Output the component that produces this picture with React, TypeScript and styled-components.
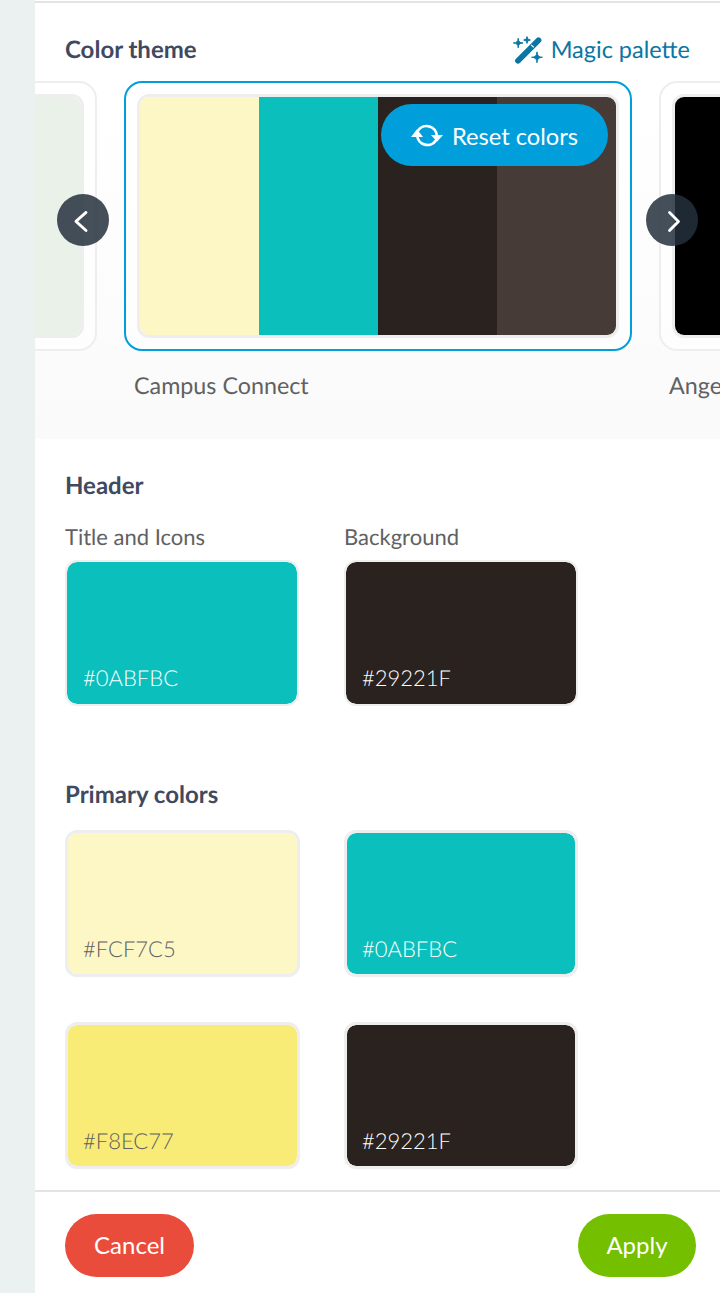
import React from 'react';
import styled, { createGlobalStyle } from 'styled-components';

const GlobalStyle = createGlobalStyle`
  html, body {
    margin: 0;
    padding: 0;
    background: #fff;
    font-family: Lato, "Open Sans", sans-serif;
    text-rendering: geometricPrecision;
  }
  * {
    box-sizing: border-box;
  }
`;

const themes = [
  { name: '', colors: ['#e9f1e9'] },
  { name: 'Campus Connect', colors: ['#fcf7c5', '#0abfbc', '#29221f', '#463b37'], selected: true },
  { name: 'Angel', colors: ['#000000'] },
];

const App = () => (
  <Page>
    <GlobalStyle />
    <Rail />
    <Panel>
      <Scroll>
        <ThemeSection>
          <TitleRow>
            <Heading>Color theme</Heading>
            <MagicLink>
              <WandIcon />
              Magic palette
            </MagicLink>
          </TitleRow>
          <Carousel>
            <Track>
              {themes.map((theme, i) => (
                <ThemeItem key={i}>
                  <ThemeCard selected={!!theme.selected}>
                    <Preview>
                      {theme.colors.map(c => (
                        <Stripe key={c} color={c} />
                      ))}
                    </Preview>
                    {theme.selected && (
                      <ResetButton>
                        <SyncIcon />
                        Reset colors
                      </ResetButton>
                    )}
                  </ThemeCard>
                  <ThemeName>{theme.name}</ThemeName>
                </ThemeItem>
              ))}
            </Track>
            <ArrowLeft>
              <Chevron viewBox="0 0 24 24">
                <path d="M14.8 5 5.5 13.3l9.3 8.4" />
              </Chevron>
            </ArrowLeft>
            <ArrowRight>
              <Chevron viewBox="0 0 24 24">
                <path d="M9.7 5 18 13.3l-8.3 8.4" />
              </Chevron>
            </ArrowRight>
          </Carousel>
        </ThemeSection>

        <HeaderSection>
          <Heading>Header</Heading>
          <SwatchGrid>
            <SwatchField>
              <FieldLabel>Title and Icons</FieldLabel>
              <Swatch color="#0abfbc" light>#0ABFBC</Swatch>
            </SwatchField>
            <SwatchField>
              <FieldLabel>Background</FieldLabel>
              <Swatch color="#29221f" light>#29221F</Swatch>
            </SwatchField>
          </SwatchGrid>
        </HeaderSection>

        <PrimarySection>
          <Heading>Primary colors</Heading>
          <PrimaryGrid>
            <Swatch color="#fcf7c5" tall>#FCF7C5</Swatch>
            <Swatch color="#0abfbc" light tall>#0ABFBC</Swatch>
            <Swatch color="#f8ec77" tall>#F8EC77</Swatch>
            <Swatch color="#29221f" light tall>#29221F</Swatch>
          </PrimaryGrid>
        </PrimarySection>
      </Scroll>
      <Footer>
        <PillButton color="#ea4c3c">Cancel</PillButton>
        <PillButton color="#74bf00" narrow>Apply</PillButton>
      </Footer>
    </Panel>
  </Page>
);

export default App;

const sparkle = (x: number, y: number, r: number) =>
  `M${x} ${y - r}Q${x} ${y} ${x + r} ${y}Q${x} ${y} ${x} ${y + r}Q${x} ${y} ${x - r} ${y}Q${x} ${y} ${x} ${y - r}Z`;

const WandIcon = () => (
  <svg width="30" height="30" viewBox="0 0 30 30">
    <path d="M5 25.7 25.5 5.3" stroke="#0b76a4" strokeWidth="5.8" strokeLinecap="round" />
    <path d="M18.2 9.8 20.8 12.4" stroke="#fff" strokeWidth="1.2" />
    <path
      d={sparkle(5.2, 8, 4.8) + sparkle(14, 5, 3.4) + sparkle(24, 22.3, 5.4)}
      fill="#0b76a4"
      stroke="#0b76a4"
      strokeWidth="1"
      strokeLinejoin="round"
    />
  </svg>
);

const SyncIcon = () => (
  <svg width="32" height="25" viewBox="0 0 32 25" fill="none">
    <path d="M7 7.8A10.2 10.2 0 0 1 25.8 12.5" stroke="#fff" strokeWidth="2.7" />
    <path d="M25 17.2A10.2 10.2 0 0 1 6.2 12.5" stroke="#fff" strokeWidth="2.7" />
    <path d="M20 12h12l-6 6.8z" fill="#fff" />
    <path d="M0 14h12L6 6.2z" fill="#fff" />
  </svg>
);

const Page = styled.div`
  display: flex;
  width: 720px;
  height: 1293px;
  overflow: hidden;
`;

const Rail = styled.div`
  flex: 0 0 35px;
  background: #eaf1f0;
`;

const Panel = styled.div`
  flex: 1;
  min-width: 0;
  display: flex;
  flex-direction: column;
  border-top: 2px solid #e3e3e3;
  margin-top: 1px;
`;

const Scroll = styled.div`
  flex: 1;
  min-height: 0;
  overflow: hidden;
`;

const ThemeSection = styled.section`
  height: 436px;
  padding-top: 31px;
  background: linear-gradient(#ffffff 20%, #fafafa 100%);
`;

const TitleRow = styled.div`
  display: flex;
  justify-content: space-between;
  align-items: center;
  height: 32px;
  padding: 0 30px;
`;

const Heading = styled.h2`
  margin: 0;
  color: #3f4a60;
  font-size: 24px;
  font-weight: 700;
  line-height: 32px;
`;

const MagicLink = styled.a`
  display: flex;
  align-items: center;
  gap: 8px;
  color: #0b76a4;
  font-size: 23.5px;
  line-height: 32px;
`;

const Carousel = styled.div`
  position: relative;
  margin-top: 15px;
  overflow: hidden;
`;

const Track = styled.div`
  display: flex;
  gap: 27px;
  margin-left: -446px;
  width: max-content;
`;

const ThemeItem = styled.div`
  width: 508px;
`;

const ThemeCard = styled.div<{ selected: boolean }>`
  position: relative;
  height: 270px;
  padding: 11px;
  border: 2px solid ${props => (props.selected ? '#009fdb' : '#eeeeee')};
  border-radius: 18px;
  background: rgba(255, 255, 255, 0.6);
`;

const Preview = styled.div`
  display: flex;
  height: 100%;
  overflow: hidden;
  border: 3px solid #eeeeee;
  border-radius: 12px;
`;

const Stripe = styled.div<{ color: string }>`
  flex: 1;
  background: ${props => props.color};
`;

const ResetButton = styled.button`
  position: absolute;
  top: 21px;
  right: 22px;
  display: flex;
  align-items: center;
  justify-content: center;
  gap: 9px;
  width: 227px;
  height: 62px;
  padding: 1px 0 0;
  border: none;
  border-radius: 31px;
  background: #009fdb;
  color: #fff;
  font-family: inherit;
  font-size: 23.7px;
`;

const ThemeName = styled.div`
  margin-top: 19px;
  padding-left: 10px;
  color: #616161;
  font-size: 23.3px;
  line-height: 30px;
`;

const ArrowLeft = styled.div`
  position: absolute;
  top: 113px;
  left: 22px;
  display: flex;
  align-items: center;
  justify-content: center;
  width: 52px;
  height: 52px;
  border-radius: 50%;
  background: rgba(36, 48, 61, 0.85);
`;

const ArrowRight = styled(ArrowLeft)`
  left: 611px;
`;

const Chevron = styled.svg`
  width: 26px;
  height: 26px;
  fill: none;
  stroke: #fff;
  stroke-width: 2.6;
  stroke-linecap: round;
  stroke-linejoin: round;
`;

const HeaderSection = styled.section`
  padding: 31px 30px 0;
`;

const SwatchGrid = styled.div`
  display: flex;
  gap: 45px;
  margin-top: 20px;
`;

const SwatchField = styled.div`
  display: flex;
  flex-direction: column;
  gap: 8px;
`;

const FieldLabel = styled.div`
  color: #616161;
  font-size: 22px;
  line-height: 30px;
`;

const Swatch = styled.div<{ color: string; light?: boolean; tall?: boolean }>`
  display: flex;
  align-items: flex-end;
  width: ${props => (props.tall ? '100%' : '234px')};
  height: ${props => (props.tall ? '147px' : '146px')};
  padding: ${props => (props.tall ? '0 15px 11px' : '0 16px 12px')};
  border: ${props => (props.tall ? '3px' : '2px')} solid #eeeeee;
  border-radius: 12px;
  background: ${props => props.color};
  background-clip: padding-box;
  color: ${props => (props.light ? '#ffffff' : '#5f5f5f')};
  font-size: 22px;
  font-weight: 300;
  line-height: 28px;
`;

const PrimarySection = styled.section`
  padding: 73px 30px 0;
`;

const PrimaryGrid = styled.div`
  display: grid;
  grid-template-columns: 235px 234px;
  column-gap: 44px;
  row-gap: 45px;
  margin-top: 19px;
`;

const Footer = styled.footer`
  flex: 0 0 103px;
  display: flex;
  justify-content: space-between;
  align-items: flex-start;
  padding: 22px 24px 0 30px;
  border-top: 2px solid #e3e3e3;
  background: #fff;
`;

const PillButton = styled.button<{ color: string; narrow?: boolean }>`
  width: ${props => (props.narrow ? '118px' : '129px')};
  height: 63px;
  padding: 0 0 2px;
  border: none;
  border-radius: 32px;
  background: ${props => props.color};
  color: #fff;
  font-family: inherit;
  font-size: 24px;
`;
